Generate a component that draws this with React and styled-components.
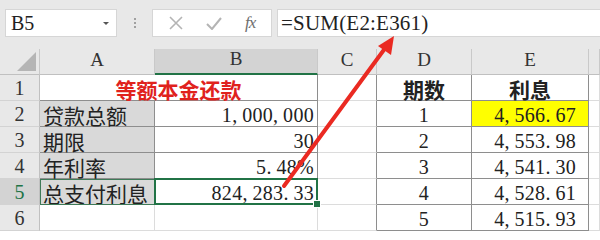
import React from "react"
import styled, { createGlobalStyle, css } from "styled-components"

const GlobalStyle = createGlobalStyle`
  html, body { margin: 0; padding: 0; background: #fff; }
  body { font-family: "Liberation Serif", "Noto Sans CJK SC", serif; }
`

const GREEN = "#217346"
const DARK = "#8e8e8e"
const LIGHT = "#dcdcdc"

const Page = styled.div`
  position: relative;
  width: 600px;
  height: 231px;
  overflow: hidden;
  background: #e8e8e8;
`

const FormulaBar = styled.div`
  height: 49px;
  box-sizing: border-box;
  padding: 9px 0 12px 5px;
  display: flex;
  align-items: stretch;
`

const NameBox = styled.div`
  width: 112px;
  box-sizing: border-box;
  background: #fff;
  border: 1px solid #d6d6d6;
  display: flex;
  align-items: center;
  justify-content: space-between;
  padding: 1px 7px 0 5px;
  font-size: 20px;
  color: #222;
`

const Caret = styled.span`
  width: 0;
  height: 0;
  border-left: 3px solid transparent;
  border-right: 3px solid transparent;
  border-top: 3px solid #555;
`

const Grip = styled.div`
  width: 35px;
  display: flex;
  flex-direction: column;
  align-items: center;
  justify-content: center;
  gap: 2px;
  span {
    width: 2px;
    height: 2px;
    background: #a0a0a0;
  }
`

const FnBox = styled.div`
  width: 120px;
  box-sizing: border-box;
  background: #fff;
  border: 1px solid #d6d6d6;
  display: flex;
  align-items: center;
  justify-content: space-around;
  padding: 0 4px;
  margin-right: 5px;
`

const Fx = styled.span`
  font-family: "Liberation Serif", serif;
  font-style: italic;
  font-size: 17px;
  color: #6e6e6e;
  letter-spacing: -1px;
`

const FormulaInput = styled.div`
  flex: 1;
  background: #fff;
  border: 1px solid #d6d6d6;
  border-right: none;
  display: flex;
  align-items: center;
  padding: 1px 0 0 3px;
  font-size: 21px;
  letter-spacing: 0.2px;
  color: #222;
`

const Sheet = styled.div`
  display: grid;
  grid-template-columns: 40px 115px 163px 59px 95px 117px 11px;
  grid-template-rows: repeat(7, 26px);
  background: #fff;
`

const ColHead = styled.div`
  box-sizing: border-box;
  background: ${p => (p.$active ? "#d3d3d3" : "#e8e8e8")};
  border-right: 1px solid #c9c9c9;
  border-bottom: ${p => (p.$active ? `2px solid ${GREEN}` : "1px solid #c0c0c0")};
  display: flex;
  align-items: flex-end;
  justify-content: center;
  padding-bottom: 3px;
  font-size: 19px;
  color: #333;
`

const Corner = styled(ColHead)`
  position: relative;
  &::after {
    content: "";
    position: absolute;
    right: 3px;
    bottom: 3px;
    border-left: 19px solid transparent;
    border-bottom: 19px solid #b5b5b5;
  }
`

const RowHead = styled.div`
  box-sizing: border-box;
  background: ${p => (p.$active ? "#d3d3d3" : "#e8e8e8")};
  border-right: 1px solid #c0c0c0;
  border-bottom: 1px solid #d3d3d3;
  display: flex;
  align-items: center;
  justify-content: center;
  padding-top: 2px;
  font-size: 20px;
  color: ${p => (p.$active ? GREEN : "#333")};
`

const Cell = styled.div`
  position: relative;
  box-sizing: border-box;
  grid-column: span ${p => p.$span || 1};
  background: ${p => p.$fill || "#fff"};
  border-right: 1px solid ${p => (p.$r ? DARK : LIGHT)};
  border-bottom: 1px solid ${p => (p.$b ? DARK : LIGHT)};
  display: flex;
  align-items: center;
  justify-content: ${p => p.$align || "flex-start"};
  padding: 3px ${p => p.$pr ?? 3}px 0 3px;
  font-size: ${p => (p.$cjk ? 21 : 20)}px;
  font-weight: ${p => (p.$bold ? 700 : 400)};
  color: ${p => p.$color || "#222"};
  letter-spacing: ${p => (p.$cjk ? 0 : 0.3)}px;
  white-space: nowrap;
  ${p => p.$framed && css`
    outline: 1px solid #3f7a58;
    outline-offset: -1px;
  `}
  ${p => p.$selected && css`
    &::after {
      content: "";
      position: absolute;
      inset: -1px -1px -1px -1px;
      border: 2px solid ${GREEN};
      pointer-events: none;
    }
    &::before {
      content: "";
      position: absolute;
      right: -4px;
      bottom: -4px;
      width: 6px;
      height: 6px;
      background: ${GREEN};
      border: 1px solid #fff;
      z-index: 2;
    }
  `}
`

// half-width punctuation like the sheet's font
const Punct = styled.span`
  display: inline-block;
  width: 10px;
`

function Num({ value }) {
  return String(value).split("").map((ch, i) =>
    ch === "," || ch === "." ? <Punct key={i}>{ch}</Punct> : ch
  )
}

const Overlay = styled.svg`
  position: absolute;
  left: 0;
  top: 0;
  pointer-events: none;
`

const leftRows = [
  ["贷款总额", "1,000,000"],
  ["期限", "30"],
  ["年利率", "5.48%"],
  ["总支付利息", "824,283.33"],
]

const interest = ["4,566.67", "4,553.98", "4,541.30", "4,528.61", "4,515.93"]

function Row({ n }) {
  const i = n - 2
  const left = leftRows[i]
  const isSel = n === 5
  return (
    <>
      <RowHead $active={isSel}>{n}</RowHead>
      {left ? (
        <>
          <Cell $fill="#d9d9d9" $cjk $r $b $framed={isSel}>{left[0]}</Cell>
          <Cell $align="flex-end" $r $b $selected={isSel}><Num value={left[1]} /></Cell>
        </>
      ) : (
        <>
          <Cell />
          <Cell />
        </>
      )}
      <Cell $r />
      <Cell $align="center" $r $b>{n - 1}</Cell>
      <Cell $align="flex-end" $pr={12} $r $b $fill={n === 2 ? "#ffff00" : undefined}>
        <Num value={interest[i]} />
      </Cell>
      <Cell />
    </>
  )
}

export default function App() {
  return (
    <Page>
      <GlobalStyle />
      <FormulaBar>
        <NameBox>B5<Caret /></NameBox>
        <Grip><span /><span /><span /></Grip>
        <FnBox>
          <svg width="14" height="14" viewBox="0 0 14 14">
            <path d="M1 1 L13 13 M13 1 L1 13" stroke="#b4b4b4" strokeWidth="1.6" />
          </svg>
          <svg width="16" height="13" viewBox="0 0 16 13">
            <path d="M1 7 L6 12 L15 1" stroke="#b4b4b4" strokeWidth="2" fill="none" />
          </svg>
          <Fx>fx</Fx>
        </FnBox>
        <FormulaInput>=SUM(E2:E361)</FormulaInput>
      </FormulaBar>

      <Sheet>
        <Corner />
        <ColHead>A</ColHead>
        <ColHead $active>B</ColHead>
        <ColHead>C</ColHead>
        <ColHead>D</ColHead>
        <ColHead>E</ColHead>
        <ColHead />

        <RowHead>1</RowHead>
        <Cell $span={2} $align="center" $cjk $bold $color="#e0221d" $r $b>等额本金还款</Cell>
        <Cell $r />
        <Cell $align="center" $cjk $bold $r $b>期数</Cell>
        <Cell $align="center" $cjk $bold $r $b>利息</Cell>
        <Cell />

        {[2, 3, 4, 5, 6].map(n => <Row key={n} n={n} />)}
      </Sheet>

      <Overlay width="600" height="231" viewBox="0 0 600 231">
        <line x1="284" y1="186" x2="386" y2="47" stroke="#ea2a22" strokeWidth="4" strokeLinecap="round" />
        <polygon points="394,36 391,55 378,46" fill="#ea2a22" />
      </Overlay>
    </Page>
  )
}
